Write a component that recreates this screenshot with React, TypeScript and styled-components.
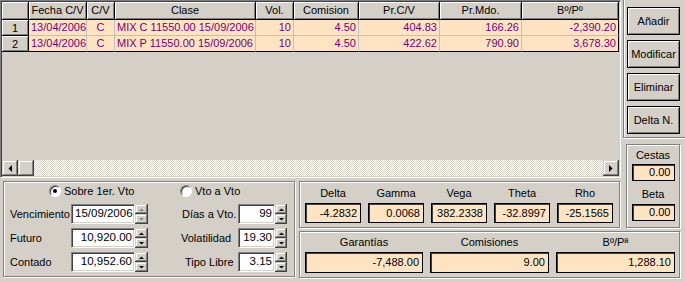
import React from 'react';
import styled, { createGlobalStyle, css } from 'styled-components';

const FACE = '#d4d0c8';
const PEACH = '#ffe4c4';

const Global = createGlobalStyle`
  html, body { margin: 0; padding: 0; background: ${FACE}; }
  body { font-family: "Liberation Sans", Arial, sans-serif; font-size: 11px; color: #000; }
  * { box-sizing: border-box; }
`;

const raised = css`
  box-shadow: inset -1px -1px 0 #404040, inset 1px 1px 0 ${FACE}, inset -2px -2px 0 #808080, inset 2px 2px 0 #fff;
`;

const etched = css`
  border: 1px solid #808080;
  box-shadow: inset 1px 1px 0 #fff, 1px 1px 0 #fff;
`;

const Window = styled.div`
  width: 685px;
  height: 282px;
  overflow: hidden;
  background: ${FACE};
  display: grid;
  grid-template-columns: 299px 323px 63px;
  grid-template-rows: 142px 36px 52px 52px;
  grid-template-areas:
    "table table buttons"
    "table table cestas"
    "params greeks cestas"
    "params totals totals";
`;

/* ---------- string grid ---------- */
const TableFrame = styled.div`
  grid-area: table;
  margin-right: 1px;
  display: flex;
  flex-direction: column;
  border: 1px solid;
  border-color: #808080 #fff #fff #808080;
  box-shadow: inset 1px 1px 0 #404040, inset -1px -1px 0 ${FACE};
  padding: 1px;
`;

const Cells = styled.div`
  flex: 1;
  background: ${FACE};
  overflow: hidden;
`;

const GridRow = styled.div<{ $h: number }>`
  display: flex;
  height: ${(p) => p.$h}px;
`;

const FixedCell = styled.div<{ $w: number }>`
  width: ${(p) => p.$w}px;
  flex: none;
  background: ${FACE};
  border-right: 1px solid #000;
  border-bottom: 1px solid #000;
  box-shadow: inset 1px 1px 0 #fff, inset -1px -1px 0 #808080;
  text-align: center;
  white-space: nowrap;
  overflow: hidden;
  line-height: 16px;
`;

const DataCell = styled.div<{ $w: number; $align: string; $last?: boolean; $edge?: boolean }>`
  width: ${(p) => p.$w}px;
  flex: none;
  background: ${PEACH};
  color: #760076;
  border-right: 1px solid ${(p) => (p.$edge ? '#000' : '#c0c0c0')};
  border-bottom: 1px solid ${(p) => (p.$last ? '#000' : '#c0c0c0')};
  text-align: ${(p) => p.$align};
  padding: 0 2px;
  white-space: nowrap;
  overflow: hidden;
  line-height: 15px;
`;

const ScrollBar = styled.div`
  display: flex;
  height: 16px;
  flex: none;
`;

const ScrollBtn = styled.div`
  width: 16px;
  height: 16px;
  flex: none;
  background: ${FACE};
  ${raised};
  display: flex;
  align-items: center;
  justify-content: center;
`;

const Track = styled.div`
  flex: 1;
  background-color: ${FACE};
  background-image: repeating-conic-gradient(#fff 0% 25%, ${FACE} 0% 50%);
  background-size: 2px 2px;
`;

/* ---------- buttons ---------- */
const ButtonPanel = styled.div`
  grid-area: buttons;
  margin: 0 0 4px 1px;
  border-left: 1px solid #808080;
  border-bottom: 1px solid #808080;
  box-shadow: inset 1px 0 0 #fff, 0 1px 0 #fff;
  padding: 7px 0 0 3px;
  display: flex;
  flex-direction: column;
  gap: 5px;
`;

const Button = styled.div`
  width: 53px;
  height: 28px;
  background: ${FACE};
  border: 1px solid #000;
  box-shadow: inset 1px 1px 0 #fff, inset -1px -1px 0 #808080;
  display: flex;
  align-items: center;
  justify-content: center;
  white-space: nowrap;
`;

/* ---------- group boxes ---------- */
const Cestas = styled.div`
  grid-area: cestas;
  margin: 2px 5px 2px 4px;
  ${etched};
  padding: 4px 5px 0 5px;
  display: flex;
  flex-direction: column;
  align-items: center;
`;

const Caption = styled.div<{ $mt?: number }>`
  line-height: 13px;
  margin-top: ${(p) => p.$mt ?? 0}px;
  white-space: nowrap;
`;

const ValueBox = styled.div<{ $w: number; $h: number; $mt: number }>`
  width: ${(p) => p.$w}px;
  height: ${(p) => p.$h}px;
  margin-top: ${(p) => p.$mt}px;
  background: ${PEACH};
  border: 1px solid #000;
  box-shadow: inset 1px 1px 0 #404040;
  text-align: right;
  padding: 0 3px;
  line-height: ${(p) => p.$h - 2}px;
  white-space: nowrap;
  overflow: hidden;
`;

const Greeks = styled.div`
  grid-area: greeks;
  margin: 3px 2px 2px 0;
  ${etched};
  padding: 5px 0 0 5px;
  display: flex;
  gap: 7px;
`;

const Totals = styled.div`
  grid-area: totals;
  margin: 1px 5px 4px 0;
  ${etched};
  padding: 4px 0 0 5px;
  display: flex;
  gap: 7px;
`;

const Stat = styled.div`
  display: flex;
  flex-direction: column;
  align-items: center;
`;

/* ---------- parameters ---------- */
const Params = styled.div`
  grid-area: params;
  margin: 3px 4px 5px 3px;
  ${etched};
  padding: 0 0 0 5px;
  display: grid;
  grid-template-columns: 62px 77px 90px 49px;
  grid-template-rows: 18px 20px 20px 20px;
  row-gap: 4px;
`;

const RadioOption = styled.div<{ $pl: number }>`
  grid-column: span 2;
  display: flex;
  align-items: center;
  gap: 3px;
  padding-left: ${(p) => p.$pl}px;
  white-space: nowrap;
`;

const RadioCircle = styled.span<{ $on?: boolean }>`
  width: 12px;
  height: 12px;
  border-radius: 50%;
  border: 1px solid;
  border-color: #808080 #fff #fff #808080;
  box-shadow: inset 1px 1px 0 #404040;
  background: #fff;
  display: flex;
  align-items: center;
  justify-content: center;
  &::after {
    content: '';
    width: 4px;
    height: 4px;
    border-radius: 50%;
    background: ${(p) => (p.$on ? '#000' : 'transparent')};
  }
`;

const Label = styled.div<{ $pl?: number }>`
  align-self: center;
  padding-left: ${(p) => p.$pl ?? 1}px;
  white-space: nowrap;
`;

const SpinEdit = styled.div`
  display: flex;
  height: 20px;
`;

const Field = styled.div<{ $align: string }>`
  flex: 1;
  background: #fff;
  border: 1px solid;
  border-color: #808080 #fff #fff #808080;
  box-shadow: inset 1px 1px 0 #404040, inset -1px -1px 0 ${FACE};
  text-align: ${(p) => p.$align};
  padding: 0 2px 0 3px;
  line-height: 17px;
  font-size: 11.5px;
  white-space: nowrap;
  overflow: hidden;
`;

const Spinner = styled.div<{ $w: number }>`
  width: ${(p) => p.$w}px;
  flex: none;
  display: flex;
  flex-direction: column;
`;

const SpinBtn = styled.div`
  flex: 1;
  background: ${FACE};
  ${raised};
  display: flex;
  align-items: center;
  justify-content: center;
`;

/* ---------- data ---------- */
const cols = [
  { t: 'Fecha C/V', w: 58, a: 'left' },
  { t: 'C/V', w: 28, a: 'center' },
  { t: 'Clase', w: 141, a: 'left' },
  { t: 'Vol.', w: 38, a: 'right' },
  { t: 'Comision', w: 65, a: 'right' },
  { t: 'Pr.C/V', w: 81, a: 'right' },
  { t: 'Pr.Mdo.', w: 82, a: 'right' },
  { t: 'Bº/Pº', w: 97, a: 'right' },
];

const rows = [
  ['13/04/2006', 'C', 'MIX C 11550.00 15/09/2006', '10', '4.50', '404.83', '166.26', '-2,390.20'],
  ['13/04/2006', 'C', 'MIX P 11550.00 15/09/2006', '10', '4.50', '422.62', '790.90', '3,678.30'],
];

const greeks = [
  ['Delta', '-4.2832'],
  ['Gamma', '0.0068'],
  ['Vega', '382.2338'],
  ['Theta', '-32.8997'],
  ['Rho', '-25.1565'],
];

const totals: [string, string, number][] = [
  ['Garantías', '-7,488.00', 118],
  ['Comisiones', '9.00', 119],
  ['Bº/Pª', '1,288.10', 119],
];

const Arrow = ({ dir, disabled }: { dir: 'up' | 'down' | 'left' | 'right'; disabled?: boolean }) => {
  const pts =
    dir === 'up'
      ? '0,3 5,3 2.5,0.5'
      : dir === 'down'
      ? '0,0 5,0 2.5,2.5'
      : dir === 'left'
      ? '4,0 4,7 0.5,3.5'
      : '0,0 0,7 3.5,3.5';
  const w = dir === 'up' || dir === 'down' ? 5 : 4;
  const h = dir === 'up' || dir === 'down' ? 3 : 7;
  return (
    <svg width={w} height={h} viewBox={`0 0 ${w} ${h}`} style={{ display: 'block' }}>
      <polygon points={pts} fill={disabled ? '#808080' : '#000'} />
    </svg>
  );
};

const Spin = ({ value, align, spinW, disabled }: { value: string; align: string; spinW: number; disabled?: boolean }) => (
  <SpinEdit>
    <Field $align={align}>{value}</Field>
    <Spinner $w={spinW}>
      <SpinBtn>
        <Arrow dir="up" disabled={disabled} />
      </SpinBtn>
      <SpinBtn>
        <Arrow dir="down" disabled={disabled} />
      </SpinBtn>
    </Spinner>
  </SpinEdit>
);

export default function App() {
  return (
    <>
      <Global />
      <Window>
        <TableFrame>
          <Cells>
            <GridRow $h={18}>
              <FixedCell $w={27} />
              {cols.map((c) => (
                <FixedCell key={c.t} $w={c.w}>
                  {c.t}
                </FixedCell>
              ))}
            </GridRow>
            {rows.map((r, ri) => (
              <GridRow $h={16} key={ri}>
                <FixedCell $w={27}>{ri + 1}</FixedCell>
                {r.map((v, ci) => (
                  <DataCell
                    key={ci}
                    $w={cols[ci].w}
                    $align={cols[ci].a}
                    $last={ri === rows.length - 1}
                    $edge={ci === r.length - 1}
                  >
                    {v}
                  </DataCell>
                ))}
              </GridRow>
            ))}
          </Cells>
          <ScrollBar>
            <ScrollBtn>
              <Arrow dir="left" />
            </ScrollBtn>
            <ScrollBtn />
            <Track />
            <ScrollBtn>
              <Arrow dir="right" />
            </ScrollBtn>
          </ScrollBar>
        </TableFrame>

        <ButtonPanel>
          <Button>Añadir</Button>
          <Button>Modificar</Button>
          <Button>Eliminar</Button>
          <Button>Delta N.</Button>
        </ButtonPanel>

        <Cestas>
          <Caption>Cestas</Caption>
          <ValueBox $w={43} $h={17} $mt={2}>0.00</ValueBox>
          <Caption $mt={7}>Beta</Caption>
          <ValueBox $w={43} $h={17} $mt={3}>0.00</ValueBox>
        </Cestas>

        <Params>
          <RadioOption $pl={40}>
            <RadioCircle $on />
            Sobre 1er. Vto
          </RadioOption>
          <RadioOption $pl={32}>
            <RadioCircle />
            Vto a Vto
          </RadioOption>

          <Label>Vencimiento</Label>
          <Spin value="15/09/2006" align="left" spinW={13} disabled />
          <Label $pl={34}>Días a Vto.</Label>
          <Spin value="99" align="right" spinW={12} />

          <Label>Futuro</Label>
          <Spin value="10,920.00" align="right" spinW={13} />
          <Label $pl={33}>Volatilidad</Label>
          <Spin value="19.30" align="right" spinW={12} />

          <Label>Contado</Label>
          <Spin value="10,952.60" align="right" spinW={13} />
          <Label $pl={37}>Tipo Libre</Label>
          <Spin value="3.15" align="right" spinW={12} />
        </Params>

        <Greeks>
          {greeks.map(([k, v]) => (
            <Stat key={k}>
              <Caption>{k}</Caption>
              <ValueBox $w={56} $h={20} $mt={3}>
                {v}
              </ValueBox>
            </Stat>
          ))}
        </Greeks>

        <Totals>
          {totals.map(([k, v, w]) => (
            <Stat key={k}>
              <Caption>{k}</Caption>
              <ValueBox $w={w} $h={21} $mt={3}>
                {v}
              </ValueBox>
            </Stat>
          ))}
        </Totals>
      </Window>
    </>
  );
}
